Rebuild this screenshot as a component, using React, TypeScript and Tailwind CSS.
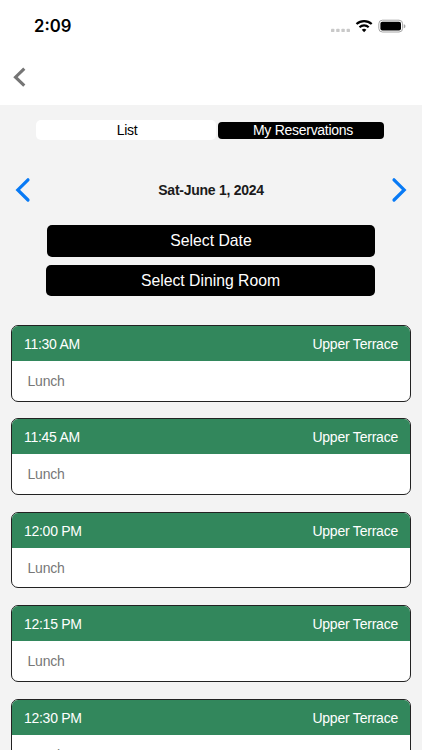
const slots = ['11:30 AM', '11:45 AM', '12:00 PM', '12:15 PM', '12:30 PM'];

function StatusBar() {
  return (
    <div className="flex h-[52px] shrink-0 items-center justify-between pl-[34px] pr-[16px]">
      <span className="font-[Inter] text-[16.7px] font-semibold leading-none text-black">2:09</span>
      <svg width="76" height="16" viewBox="0 0 76 16" aria-hidden="true">
        <g fill="#c9c9c9">
          <rect x="1" y="10.7" width="3.4" height="3.4" rx="0.9" />
          <rect x="6.2" y="10.7" width="3.4" height="3.4" rx="0.9" />
          <rect x="11.4" y="10.7" width="3.4" height="3.4" rx="0.9" />
          <rect x="16.6" y="10.7" width="3.4" height="3.4" rx="0.9" />
        </g>
        <g fill="none" stroke="#000" strokeWidth="2.2">
          <path d="M26.5 6a11.2 11.2 0 0 1 15.2 0" />
          <path d="M29.5 9.2a6.8 6.8 0 0 1 9.2 0" />
        </g>
        <path d="M34.1 14.2l-2.3-2.5a3.5 3.5 0 0 1 4.6 0z" fill="#000" />
        <rect x="48.8" y="2.2" width="23.8" height="11.8" rx="3.6" fill="none" stroke="#a5a5a5" />
        <rect x="50.4" y="3.8" width="20.6" height="8.6" rx="2" fill="#000" />
        <path d="M73.8 6.2c2.2.5 2.2 3.5 0 4z" fill="#a5a5a5" />
      </svg>
    </div>
  );
}

function SlotCard({ time }: { time: string }) {
  return (
    <div className="flex h-[76.6px] shrink-0 flex-col overflow-hidden rounded-[7px] border border-[#222] bg-white text-[14px]">
      <div className="flex h-[35px] shrink-0 items-center justify-between bg-[#32875c] px-[12px] pt-[2px] tracking-[-0.22px] text-white">
        <span className="tracking-[-0.28px]">{time}</span>
        <span>Upper Terrace</span>
      </div>
      <div className="flex flex-1 items-center pl-[15.5px] pt-[1.5px] tracking-[-0.2px] text-[#777]">Lunch</div>
    </div>
  );
}

export default function App() {
  return (
    <div className="flex h-[750px] w-[422px] flex-col overflow-hidden bg-[#f3f3f3] font-['Liberation_Sans',Arial,sans-serif]">
      <header className="flex h-[105px] shrink-0 flex-col bg-white">
        <StatusBar />
        <button aria-label="Back" className="ml-[12px] mt-[14px] w-[15px]">
          <svg width="15" height="22" viewBox="0 0 15 22" fill="none" stroke="#757575" strokeWidth="3.1">
            <path d="M12.3 2.7L3.5 11.2l8.8 8.5" />
          </svg>
        </button>
      </header>

      <div className="ml-[36px] mt-[15px] flex h-[20px] shrink-0 items-center text-[14px] tracking-[-0.28px]">
        <button className="h-[19.5px] w-[180px] rounded-[5px] bg-white pl-[2px] leading-[20px] text-black">List</button>
        <button className="ml-[2px] h-[17px] w-[166px] rounded-[4px] bg-black pl-[4px] leading-[17px] text-white">
          My Reservations
        </button>
      </div>

      <div className="mt-[36px] flex h-[28px] shrink-0 items-center justify-between pl-[14px] pr-[14px]">
        <svg width="18" height="28" viewBox="0 0 18 28" fill="none" stroke="#087af5" strokeWidth="3.2" strokeLinecap="round">
          <path d="M14 3.8L3.8 13.9 14 24" />
        </svg>
        <span className="pt-px text-[14px] font-bold tracking-[-0.27px] text-[#1b1b1b]">Sat-June 1, 2024</span>
        <svg width="18" height="28" viewBox="0 0 18 28" fill="none" stroke="#087af5" strokeWidth="3.2" strokeLinecap="round">
          <path d="M4 3.8l10.2 10.1L4 24" />
        </svg>
      </div>

      <div className="mt-[21px] flex shrink-0 flex-col items-end gap-[8px] pr-[47px] text-[15.75px] text-white">
        <button className="h-[31.5px] w-[328px] rounded-[5px] bg-black pt-px">Select Date</button>
        <button className="h-[31.5px] w-[329px] rounded-[5px] bg-black pt-px">Select Dining Room</button>
      </div>

      <main className="ml-[11px] mr-[11px] mt-[29px] flex flex-col gap-[16.8px]">
        {slots.map((time) => (
          <SlotCard key={time} time={time} />
        ))}
      </main>
    </div>
  );
}
